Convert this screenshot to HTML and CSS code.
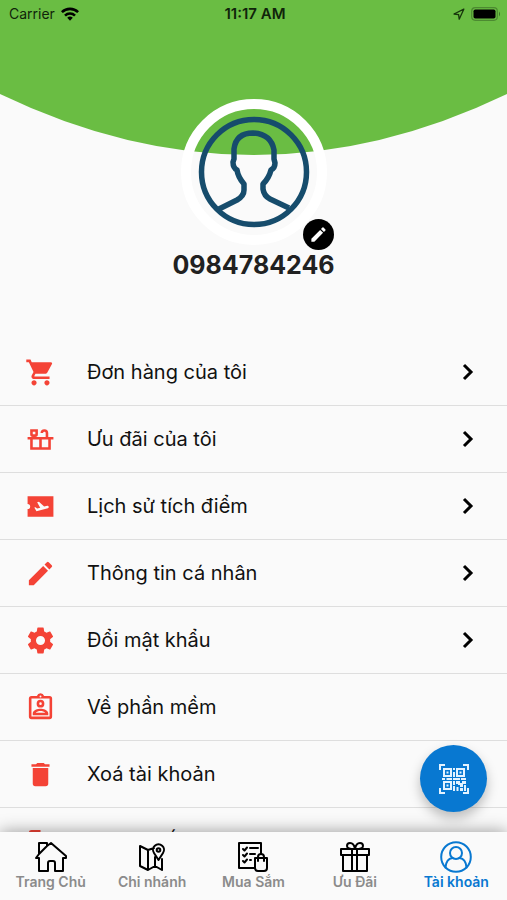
FILE: index.html
```html
<!DOCTYPE html>
<html lang="vi">
<head>
<meta charset="utf-8">
<meta name="viewport" content="width=device-width, initial-scale=1">
<title>Tài khoản</title>
<link rel="stylesheet" href="styles.css">
</head>
<body>
<div class="app">
  <main class="content">
    <header class="profile">
      <svg class="arc" viewBox="0 0 507 155" preserveAspectRatio="none" aria-hidden="true"><path d="M0 0H507V94Q253.500 216 0 94Z"/></svg>
      <div class="status">
        <span class="carrier">Carrier
          <svg width="18" height="14" viewBox="0 0 18 14" aria-hidden="true"><g fill="none" stroke="#000" stroke-width="2.600"><path d="M.9 5.200a11.500 11.500 0 0 1 16.200 0"/><path d="M4 8.600a7.100 7.100 0 0 1 10 0"/></g><path d="M9 13.800 6.200 10.800a4 4 0 0 1 5.600 0Z"/></svg>
        </span>
        <span class="time">11:17 AM</span>
        <span class="power">
          <svg width="12" height="12" viewBox="0 0 12 12" aria-hidden="true"><path d="M10.800 1.200 1 6l4.600.7.600 4.500Z" fill="none" stroke="#17350c" stroke-width="1.300" stroke-linejoin="round"/></svg>
          <svg width="30" height="14" viewBox="0 0 30 14" aria-hidden="true"><rect x=".7" y=".7" width="25.600" height="12.600" rx="3.500" fill="none" stroke="#4c8a31" stroke-width="1.200"/><rect x="2.500" y="2.500" width="22" height="9" rx="1.800"/><path d="M28 4.500q2 2.500 0 5Z" fill="#3d7426"/></svg>
        </span>
      </div>
      <div class="avatar">
        <svg class="portrait" viewBox="0 0 126 126" role="img" aria-label="Ảnh đại diện"><g fill="none" stroke="#164c6c" stroke-width="5.500" stroke-linejoin="round"><circle cx="63" cy="63" r="52.500"/><path d="M28 100 46 91Q53 87 53 81V75Q47 68 46 61Q42 59 42 53L43 50V40Q45 24 62 24Q80 25 83 41V50L84 54Q84 59 80 61Q78 69 72 75V80Q73 87 79 90L98 99"/></g></svg>
        <button class="edit" aria-label="Sửa ảnh"><svg width="19" height="19" viewBox="0 0 24 24"><path fill="#fff" d="M3 17.250V21h3.750L17.810 9.940l-3.750-3.750L3 17.250zM20.710 7.040a1 1 0 0 0 0-1.410l-2.340-2.340a1 1 0 0 0-1.410 0l-1.830 1.830 3.750 3.750 1.830-1.830z"/></svg></button>
      </div>
      <h1 class="phone">0984784246</h1>
    </header>

    <nav class="menu" aria-label="Tài khoản">
      <a class="row" href="#orders"><svg class="ico" viewBox="0 0 24 24"><path d="M7 18c-1.100 0-1.990.9-1.990 2S5.900 22 7 22s2-.9 2-2-.9-2-2-2zM1 2v2h2l3.600 7.590-1.350 2.450C4.520 15.370 5.480 17 7 17h12v-2H7.420c-.14 0-.25-.11-.25-.25l.03-.12.9-1.630h7.450c.75 0 1.410-.41 1.750-1.030l3.580-6.490A1 1 0 0 0 20 4H5.210l-.94-2H1zm16 16c-1.100 0-1.990.9-1.990 2s.89 2 1.990 2 2-.9 2-2-.9-2-2-2z"/></svg><span>Đơn hàng của tôi</span><svg class="chev" viewBox="0 0 12 18"><path d="m2 2 7 7-7 7"/></svg></a>
      <a class="row" href="#offers"><svg class="ico" viewBox="0 0 24 24"><path fill-rule="evenodd" d="M22 10h-4V7a3 3 0 0 0-6 0h2a1 1 0 0 1 2 0v3H8a2 2 0 0 0 2-2V4H4v4a2 2 0 0 0 2 2H2v2h2v8h16v-8h2zM6 6h2v2H6zM6 12h5v6H6zM13 12h5v6h-5z"/></svg><span>Ưu đãi của tôi</span><svg class="chev" viewBox="0 0 12 18"><path d="m2 2 7 7-7 7"/></svg></a>
      <a class="row" href="#points"><svg class="ico" viewBox="0 0 24 24"><path fill-rule="evenodd" d="M22 4H2v6a2 2 0 0 1 0 4v6h20zM17.730 13.300l-8.860 2.360-1.660-2.880.93-.25 1.260.99 2.390-.64-2.400-4.160 1.400-.38 4.010 3.740 2.440-.65a.97.97 0 0 1 .49 1.870z"/></svg><span>Lịch sử tích điểm</span><svg class="chev" viewBox="0 0 12 18"><path d="m2 2 7 7-7 7"/></svg></a>
      <a class="row" href="#info"><svg class="ico" viewBox="0 0 24 24"><path d="M3 17.250V21h3.750L17.810 9.940l-3.750-3.750L3 17.250zM20.710 7.040a1 1 0 0 0 0-1.410l-2.340-2.340a1 1 0 0 0-1.410 0l-1.830 1.830 3.750 3.750 1.830-1.830z"/></svg><span>Thông tin cá nhân</span><svg class="chev" viewBox="0 0 12 18"><path d="m2 2 7 7-7 7"/></svg></a>
      <a class="row" href="#password"><svg class="ico" viewBox="0 0 24 24"><path d="M19.430 12.980c.04-.32.07-.64.07-.98s-.03-.66-.07-.98l2.110-1.650c.19-.15.24-.42.12-.64l-2-3.460c-.12-.22-.39-.3-.61-.22l-2.490 1c-.52-.4-1.080-.73-1.690-.98l-.38-2.650A.49.49 0 0 0 14 2h-4c-.25 0-.46.18-.49.42l-.38 2.650c-.61.25-1.170.59-1.690.98l-2.490-1c-.23-.09-.49 0-.61.22l-2 3.460c-.13.22-.07.49.12.64l2.110 1.650c-.04.32-.07.65-.07.98s.03.66.07.98l-2.110 1.650c-.19.15-.24.42-.12.64l2 3.460c.12.22.39.3.61.22l2.490-1c.52.4 1.080.73 1.690.98l.38 2.650c.03.24.24.42.49.42h4c.25 0 .46-.18.49-.42l.38-2.650c.61-.25 1.170-.59 1.690-.98l2.490 1c.23.09.49 0 .61-.22l2-3.460c.12-.22.07-.49-.12-.64zM12 15.500a3.500 3.500 0 1 1 0-7 3.500 3.500 0 0 1 0 7z"/></svg><span>Đổi mật khẩu</span><svg class="chev" viewBox="0 0 12 18"><path d="m2 2 7 7-7 7"/></svg></a>
      <a class="row" href="#about"><svg class="ico" viewBox="0 0 24 24"><path fill-rule="evenodd" d="M19 3h-4.180a3 3 0 0 0-5.640 0H5a2 2 0 0 0-2 2v14a2 2 0 0 0 2 2h14a2 2 0 0 0 2-2V5a2 2 0 0 0-2-2zM19 19H5V5h14zM12 2.750a.75.75 0 1 1 0 1.500.75.75 0 0 1 0-1.500z"/><path fill-rule="evenodd" d="M12 6a3 3 0 1 1 0 6 3 3 0 0 1 0-6zm0 2a1 1 0 1 0 0 2 1 1 0 0 0 0-2zM6 16.470C6 13.970 9.970 12.900 12 12.900s6 1.070 6 3.570V18H6zm2.300-.47h7.400c-.7-.7-2.400-1.200-3.700-1.200s-3 .5-3.700 1.200z"/></svg><span>Về phần mềm</span></a>
      <a class="row" href="#delete"><svg class="ico" viewBox="0 0 24 24"><path d="M6 19a2 2 0 0 0 2 2h8a2 2 0 0 0 2-2V7H6zM19 4h-3.500l-1-1h-5l-1 1H5v2h14z"/></svg><span>Xoá tài khoản</span></a>
      <a class="row" href="#logout"><svg class="ico" viewBox="0 0 24 24"><path d="M12 3H5a2 2 0 0 0-2 2v14a2 2 0 0 0 2 2h7v-2H5V5h7zM17 7l-1.400 1.400L18.200 11H9v2h9.200l-2.600 2.600L17 17l5-5z"/></svg><span>Đăng xuất</span></a>
    </nav>
  </main>

  <button class="fab" aria-label="Quét mã QR"><svg width="32" height="32" viewBox="0 0 32 32"><g fill="none" stroke="#e4f3ff" stroke-width="2"><path d="M2 7V2h5M25 2h5v5M30 25v5h-5M7 30H2v-5"/><path d="M6 6h7v7H6zM19 6h7v7h-7zM6 19h7v7H6z"/></g><g fill="#e4f3ff"><path d="M8.500 8.500h2v2h-2zM21.500 8.500h2v2h-2zM8.500 21.500h2v2h-2zM15 5h2v2h-2zM15 9h2v5h-2zM4 15h3v2H4zM8.500 15H14v2H8.500zM15 15h7v2h-7zM23 15h5v2h-5zM15 18h2v4h-2zM18 18h4v2h2v-2h4v3h-3v3h-3v-2h-2v-1h-2zM15 23h2v5h-2zM18.500 24h2v4h-2zM22 25h3v3h-3zM26 22h2v6h-2z"/></g></svg></button>

  <nav class="tabs" aria-label="Điều hướng chính">
    <a class="tab" href="#home"><svg viewBox="0 0 32 32"><path d="M4 17H1l3-4V2h8v3l4-3 15 13v2h-3v13h-8v-8q0-2-2-2h-3q-2 0-2 2v8H4V17M4 13l8-8"/></svg><span>Trang Chủ</span></a>
    <a class="tab" href="#branches"><svg viewBox="0 0 32 32"><path d="M18 7 12 9 4 5V25l8 4 7-4 7 4V18M12 9V29M19 16V25M22.500 19l-4.500-7a5.500 5.500 0 1 1 9 0Z"/><circle cx="22.500" cy="9" r="1.800"/></svg><span>Chi nhánh</span></a>
    <a class="tab" href="#shop"><svg viewBox="0 0 32 32"><path d="M17 27H2V2h22v11M6 8l1.500 1.500L10 6.500M13 7h8M6 14l1.500 1.500L10 12.500M13 13h5M6 20l1.500 1.500L10 18.500M13 19h1M18 17h12v10q0 3-3 3h-6q-3 0-3-3zM21 20v-4q0-3 3-3t3 3v4"/></svg><span>Mua Sắm</span></a>
    <a class="tab" href="#gifts"><svg viewBox="0 0 32 32"><path d="M2 8h28v6H2zM4 14h24v16H4zM13 8v22M18 8v22M15 8Q8 8 8 5t3-3q4 0 5 6 1-6 5-6 3 0 3 3t-7 3"/></svg><span>Ưu Đãi</span></a>
    <a class="tab active" href="#account" aria-current="page"><svg viewBox="0 0 32 32"><circle cx="16" cy="16" r="14.800"/><circle cx="16" cy="12" r="6"/><path d="M5.500 26.500Q6 18 12.500 17M19.500 17Q26 18 26.500 26.500"/></svg><span>Tài khoản</span></a>
  </nav>
</div>
</body>
</html>
```

FILE: styles.css
```css
* { box-sizing: border-box; }
body {
  margin: 0;
  background: #fafafa;
  color: #111;
  font-family: Inter, "Noto Sans", sans-serif;
}
a { color: inherit; text-decoration: none; }
button { border: 0; padding: 0; display: grid; place-items: center; border-radius: 50%; }
svg { display: block; flex: none; }

.app { position: relative; display: flex; flex-direction: column; height: 100vh; overflow: hidden; }
.content { flex: 1; min-height: 0; overflow-y: auto; scrollbar-width: none; }

.profile { position: relative; display: flex; flex-direction: column; align-items: center; padding-bottom: 58px; }
.arc { position: absolute; top: 0; left: 0; width: 100%; height: 155px; fill: #6abd43; }
.status {
  position: relative;
  display: grid;
  grid-template-columns: 1fr auto 1fr;
  align-items: center;
  width: 100%;
  height: 27px;
  padding: 0 6px 0 9px;
  font-size: 14px;
  color: #10240a;
}
.carrier, .power { display: flex; align-items: center; gap: 6px; }
.power { justify-content: flex-end; }
.time { font-size: 15px; font-weight: 600; }

.avatar { position: relative; width: 146px; height: 146px; margin-top: 72px; border: 10px solid #fff; border-radius: 50%; }
.portrait { width: 100%; height: 100%; }
.edit { position: absolute; right: -17px; bottom: -15px; width: 31px; height: 31px; background: #000; }
.phone { margin: 4px 0 0; font-size: 25px; line-height: 32px; font-weight: 700; color: #212121; }

.row {
  display: flex;
  align-items: center;
  height: 67px;
  padding: 0 33px 0 25px;
  border-bottom: 1px solid #dedede;
  font-size: 20px;
}
.row span { flex: 1; margin-left: 31px; }
.ico { width: 31px; height: 31px; fill: #f44336; }
.chev { width: 12px; height: 18px; fill: none; stroke: #000; stroke-width: 3; }

.fab {
  position: absolute;
  right: 20px;
  bottom: 88px;
  z-index: 2;
  width: 67px;
  height: 67px;
  background: #0878d1;
  box-shadow: 0 6px 12px rgba(0, 0, 0, .25);
}

.tabs {
  position: relative;
  z-index: 1;
  display: grid;
  grid-template-columns: repeat(5, 1fr);
  height: 68px;
  padding-top: 9px;
  background: #fafafa;
  box-shadow: 0 0 16px rgba(0, 0, 0, .4);
}
.tab { display: flex; flex-direction: column; align-items: center; font-size: 14px; line-height: 18px; font-weight: 600; color: #8b8b8b; }
.tab svg { width: 32px; height: 32px; fill: none; stroke: #000; stroke-width: 2; stroke-linejoin: round; stroke-linecap: round; }
.active { color: #0878d1; }
.active svg { stroke: #0878d1; }
```
